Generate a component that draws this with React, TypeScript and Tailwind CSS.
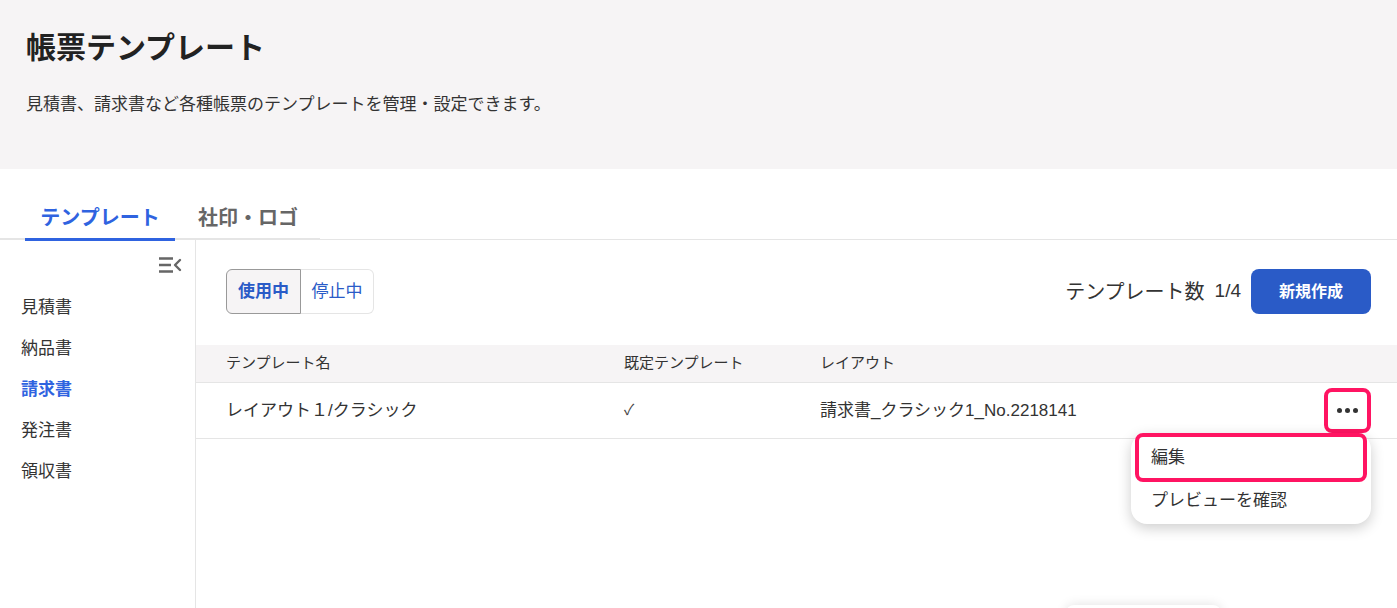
import { useState } from "react";

const font = { fontFamily: '"Liberation Sans", "Noto Sans CJK JP", sans-serif' };

const sideItems = ["見積書", "納品書", "請求書", "発注書", "領収書"];

function CollapseIcon() {
  return (
    <svg width="24" height="18" viewBox="0 0 24 18" fill="none" stroke="#666" strokeWidth="2.4">
      <path d="M1 2.5h14M1 9h12M1 15.5h14" />
      <path d="M22 4l-5 5 5 5" strokeLinecap="round" strokeLinejoin="round" />
    </svg>
  );
}

export default function App() {
  const [tab, setTab] = useState(0);
  const [active, setActive] = useState(2);
  const [useOn, setUseOn] = useState(true);

  return (
    <div className="relative h-[608px] w-[1397px] overflow-hidden bg-white text-[#222]" style={font}>
      <header className="h-[169px] bg-[#f6f4f5] px-[26px] pt-[30px]">
        <h1 className="text-[30px] font-bold leading-9 text-[#222]">帳票テンプレート</h1>
        <p className="mt-[26px] text-[17px] text-[#333]">見積書、請求書など各種帳票のテンプレートを管理・設定できます。</p>
      </header>

      <nav className="relative mt-[28px] flex h-[43px] border-b border-[#e5e5e5] pl-[25px]">
        <div className="absolute bottom-[-1px] left-0 h-[2px] w-[320px] bg-[#e5e5e5]" />
        {["テンプレート", "社印・ロゴ"].map((t, i) => (
          <button
            key={t}
            onClick={() => setTab(i)}
            className={`relative z-10 h-full whitespace-nowrap text-[20px] font-bold ${
              i === 0 ? "w-[150px] text-[#2f63e0]" : "ml-[23px] text-[#666]"
            }`}
          >
            {t}
            {tab === i && <span className="absolute bottom-[-2px] left-0 h-[3px] w-full bg-[#2f63e0]" />}
          </button>
        ))}
      </nav>

      <div className="flex h-[370px]">
        <aside className="w-[196px] shrink-0 border-r border-[#e5e5e5]">
          <div className="flex justify-end pr-[13px] pt-[16px]">
            <CollapseIcon />
          </div>
          <ul className="mt-[13px]">
            {sideItems.map((s, i) => (
              <li key={s}>
                <button
                  onClick={() => setActive(i)}
                  className={`h-[41px] pl-[21px] text-[17px] ${
                    active === i ? "font-bold text-[#2f63e0]" : "text-[#333]"
                  }`}
                >
                  {s}
                </button>
              </li>
            ))}
          </ul>
        </aside>

        <main className="relative flex-1">
          <div className="flex items-center justify-between pl-[30px] pr-[26px] pt-[29px]">
            <div className="flex h-[45px] text-[17px]">
              <button
                onClick={() => setUseOn(true)}
                className={`w-[75px] rounded-l-md border ${
                  useOn ? "border-[#999] bg-[#f6f4f5] font-bold" : "border-[#e5e5e5] bg-white"
                } text-[#2a5bc7]`}
              >
                使用中
              </button>
              <button
                onClick={() => setUseOn(false)}
                className={`w-[73px] rounded-r-md border border-l-0 ${
                  !useOn ? "border-[#999] bg-[#f6f4f5] font-bold" : "border-[#e5e5e5] bg-white"
                } text-[#2a5bc7]`}
              >
                停止中
              </button>
            </div>
            <div className="flex items-center">
              <span className="text-[20px] text-[#333]">テンプレート数</span>
              <span className="ml-[10px] text-[19px] text-[#333]">1/4</span>
              <button className="ml-[10px] h-[45px] w-[120px] rounded-lg bg-[#2a5bc7] text-[16px] font-bold text-white">
                新規作成
              </button>
            </div>
          </div>

          <div className="mt-[31px]">
            <div className="flex h-[38px] items-center border-b border-[#e5e5e5] bg-[#f6f4f5] pl-[30px] text-[15px] text-[#333]">
              <span className="w-[398px]">テンプレート名</span>
              <span className="w-[196px]">既定テンプレート</span>
              <span>レイアウト</span>
            </div>
            <div className="flex h-[56px] items-center border-b border-[#e5e5e5] pl-[30px] pr-[26px] text-[17px] text-[#333]">
              <span className="w-[398px]">レイアウト１/クラシック</span>
              <span className="w-[196px] text-[15px] text-[#444]">✓</span>
              <span className="flex-1">請求書_クラシック1_No.2218141</span>
              <button className="flex h-[45px] w-[47px] items-center justify-center gap-[3px] rounded-lg border-[4px] border-[#ff1462] bg-white">
                <span className="h-[5px] w-[5px] rounded-full bg-[#333]" />
                <span className="h-[5px] w-[5px] rounded-full bg-[#333]" />
                <span className="h-[5px] w-[5px] rounded-full bg-[#333]" />
              </button>
            </div>
          </div>

          <div className="absolute left-[935px] top-[193px] w-[240px] rounded-2xl bg-white pb-[4px] shadow-[0_4px_14px_rgba(0,0,0,0.2)]">
            <div className="mx-[4px] flex h-[49px] items-center rounded-lg border-[4px] border-[#ff1462] pl-[12px] text-[17px] text-[#333]">
              編集
            </div>
            <div className="flex h-[38px] items-center pl-[20px] text-[17px] text-[#333]">プレビューを確認</div>
          </div>

          <div className="absolute left-[870px] top-[365px] h-[20px] w-[155px] rounded-lg bg-white shadow-[0_0_12px_rgba(0,0,0,0.12)]" />
        </main>
      </div>
    </div>
  );
}
